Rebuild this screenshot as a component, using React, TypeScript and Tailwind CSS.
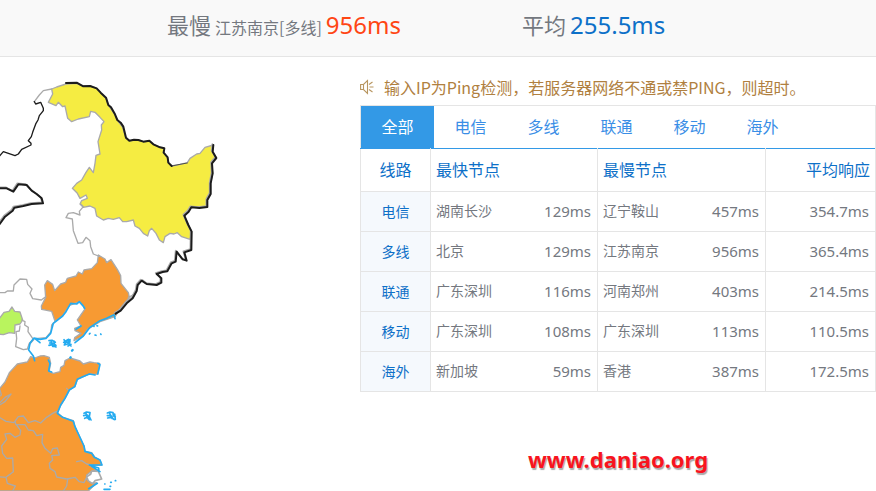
import { useState } from "react";

const tabs = ["全部", "电信", "多线", "联通", "移动", "海外"];

const rows = [
  { line: "电信", fast: ["湖南长沙", "129ms"], slow: ["辽宁鞍山", "457ms"], avg: "354.7ms" },
  { line: "多线", fast: ["北京", "129ms"], slow: ["江苏南京", "956ms"], avg: "365.4ms" },
  { line: "联通", fast: ["广东深圳", "116ms"], slow: ["河南郑州", "403ms"], avg: "214.5ms" },
  { line: "移动", fast: ["广东深圳", "108ms"], slow: ["广东深圳", "113ms"], avg: "110.5ms" },
  { line: "海外", fast: ["新加坡", "59ms"], slow: ["香港", "387ms"], avg: "172.5ms" },
];

const eastBorder =
  "M640 225L638 245 649 264 636 280 638 310 632 340 632 372 622 390 622 411 598 414 574 412 566 425 553 437 565 465 575 485 574 540 553 547 560 572 548 568 530 545 527 575 515 580 502 604 488 606 470 612 484 625 484 638 470 645 440 642 425 632 413 645 410 663 398 685 380 700 362 722 347 731";
const northBorder =
  "M198 39L230 38 250 49 270 48 290 55 302 68 318 83 325 105 333 112 345 133 352 150 362 158 370 170 378 203 388 212 402 209 415 210 430 215 448 212 460 223 480 232 493 235 491 248 503 262 505 278 515 288";

function RegionMap() {
  return (
    <svg viewBox="0 -39 720 1302" className="block w-60" fill="none" strokeLinejoin="round" strokeLinecap="round" aria-hidden="true">
      {/* Heilongjiang */}
      <path
        d="M155 57L170 51 198 42 230 40 245 47 270 47 290 55 302 68 318 85 325 105 345 135 352 150 368 172 378 205 390 212 415 210 430 215 448 213 460 222 480 232 492 235 490 248 502 262 505 278 515 288 540 283 562 278 570 265 590 252 600 250 615 232 640 225 638 245 648 262 635 280 638 310 632 340 632 372 622 390 620 410 572 412 553 437 565 465 575 485 570 508 545 500 532 488 522 492 510 490 495 500 490 518 478 510 468 490 455 475 448 482 443 498 430 490 418 475 405 468 400 450 380 455 368 455 358 443 340 448 325 445 310 450 290 438 285 415 270 408 250 412 240 402 245 392 262 385 258 375 240 385 232 370 217 355 230 340 245 330 258 307 268 292 280 308 285 280 288 256 300 252 294 215 305 180 304 165 312 155 300 142 285 127 272 124 268 140 235 147 215 155 203 145 195 108 188 110 175 97 168 107 145 97 158 72Z"
        fill="#f5ec42" stroke="#aaa" strokeWidth="4"
      />
      {/* Liaoning */}
      <path
        d="M295 555L315 567 320 578 333 569 352 598 362 617 363 640 385 668 388 682 365 710 345 740 300 755 262 778 250 798 222 812 224 803 243 790 225 782 224 775 243 768 232 750 254 718 250 708 238 696 208 706 188 738 165 754 155 724 125 718 124 708 137 682 134 645 142 632 158 643 164 662 182 642 197 637 202 625 228 618 235 606 247 612 252 600 275 596 292 578Z"
        fill="#f79a33" stroke="#aaa" strokeWidth="4"
      />
      {/* Beijing */}
      <path d="M-5 750L12 727 27 724 36 711 44 724 60 726 68 750 60 762 45 765 44 790 28 788 10 794 -5 792Z" fill="#b9f45e" stroke="#aaa" strokeWidth="4" />
      {/* Shandong, Jiangsu and the inland provinces */}
      <path
        d="M-5 960L15 936 28 908 52 882 82 876 92 860 104 864 120 858 132 857 148 862 152 880 147 905 160 910 180 905 182 892 192 886 195 872 210 864 240 873 250 882 270 876 282 878 299 880 294 912 280 913 268 912 245 922 232 928 225 950 208 960 195 985 180 1010 172 1028 188 1042 220 1052 225 1070 238 1098 252 1128 255 1144 275 1148 285 1162 300 1170 305 1185 270 1186 290 1200 275 1204 260 1215 260 1228 275 1240 290 1238 265 1263 -5 1263Z"
        fill="#f79a33" stroke="#aaa" strokeWidth="4"
      />
      {/* Shanghai */}
      <path d="M275 1203L295 1204 305 1227 285 1232 278 1241 265 1233 260 1220 272 1213Z" fill="#fff" stroke="#aaa" strokeWidth="5" />
      {/* provincial borders */}
      <g stroke="#aaa" strokeWidth="4">
        <path d="M155 57L130 62 118 75 103 95" />
        <path d="M242 402L250 410 238 424 240 435 220 428 205 430 198 443 217 447 220 482 234 520 248 518 258 502 270 512 272 530 280 552 295 558" />
        <path d="M-5 668L15 668 22 663 40 663 42 645 60 627 80 628 83 643 96 657 90 670 98 686 124 690 137 680" />
        <path d="M65 750L75 755 74 765 85 772 84 785 100 808 88 820 82 837 70 839 47 830 50 805 48 785 58 783 60 768 M165 754L155 765 153 785 138 803 105 806" />
        <path d="M385 682L405 672 415 640 428 630 440 640" />
        <path d="M102 808L86 826" />
      </g>
      <g stroke="#aaa" strokeWidth="4">
        <path d="M-5 1040L18 1054 42 1058 55 1040 70 1038 85 1058 105 1052 122 1059 140 1042 158 1030 170 1024" />
        <path d="M45 1055L48 1064 75 1064 85 1080 100 1082 110 1097 128 1093 126 1118 135 1135 152 1150 158 1136 172 1134 178 1155 155 1157 158 1170 148 1180 150 1195 165 1205 170 1221 200 1227 225 1222 238 1235 252 1238 260 1222" />
        <path d="M50 1065L62 1082 60 1095 45 1102 30 1090 15 1092 20 1108 5 1128 8 1150 20 1165 38 1164 40 1205 18 1222 -5 1220 M18 1222L22 1240 46 1248 38 1263 M203 1228L200 1248 190 1263" />
        <path d="M230 1175L245 1172 260 1182 275 1185 M0 998L15 982 33 972 15 995 0 1004 M0 960L4 975 0 978 M200 955L206 962" />
      </g>
      {/* national border: a grey inner line under the dark outer one */}
      <g stroke="#aaa" strokeWidth="5" transform="translate(-3 -3)">
        <path d={eastBorder} />
        <path d="M-3 355L20 355 40 365 55 343 80 345 95 362 125 385 129 400 95 402 70 408 43 413 38 422 15 440 -3 465" />
      </g>
      <g stroke="#1c1c1c" strokeWidth="6">
        <path d="M103 95L107 102 122 97 130 115 130 122 118 137 114 150 108 160 98 187 94 200 85 212 93 220 93 225 65 238 55 252 45 257 10 245 -3 260" strokeWidth="4" />
        <path d="M-3 355L20 355 40 365 55 343 80 345 95 362 110 372 125 385 129 400 95 402 70 408 43 413 38 422 15 440 -3 465" />
        <path d={northBorder} />
        <path d="M515 288L540 283 562 279" strokeWidth="2" />
        <path d={eastBorder} />
      </g>
      {/* coastline */}
      <g stroke="#24abf0" strokeWidth="5">
        <path d="M345 746L342 734 320 745 300 752 270 772 250 798 225 818 M243 768L228 778 M254 715L248 706 238 695 230 702 212 700 198 725 188 738 160 760 152 790 138 805 120 808 102 804 90 820 86 840 100 858 104 872 M105 806L120 818" />
        <path d="M145 870L150 880 146 903 155 906 M294 880L300 884 293 912 M285 915L268 912 245 922 232 928 224 950 208 960 195 985 182 1005 172 1030 188 1042 220 1054 225 1070 238 1098 252 1128 255 1144 275 1150 283 1162 300 1170 306 1185 268 1185 296 1194 297 1204 M275 1189L300 1205 M292 1240L266 1256" />
        <path d="M216 842L218 840 M211 863L212 862" strokeWidth="7" />
        <path d="M147 812L156 811 166 817 M149 819L160 820 168 826 M147 826L156 824 168 831 M153 812L158 829 M163 814L162 830" />
        <path d="M192 809L197 818 193 825 203 822 M198 812L206 808 204 820 213 828 M210 809L209 819 M191 817L210 815 M204 828L213 823" />
        <path d="M252 1030L260 1026 270 1028 268 1040 273 1050 M251 1037L262 1035 268 1044 M254 1045L262 1042 268 1049 M257 1027L262 1044" />
        <path d="M322 1029L330 1026 339 1028 340 1038 346 1040 M322 1037L332 1036 340 1047 M323 1044L332 1042 343 1049 M328 1028L336 1045 M344 1032L346 1048" />
        <path d="M268 792L270 790 M281 768L282 769 M291 767L293 768 M285 795L288 796 M302 792L303 793 M314 1242h1 M332 1237h2 M346 1232h1 M330 1249h2 M312 1258L330 1258" />
      </g>
    </svg>
  );
}

function SpeakerIcon() {
  return (
    <svg viewBox="0 0 16 16" className="h-4 w-4 shrink-0" fill="none" stroke="#b89660" strokeWidth="1.1" aria-hidden="true">
      <path d="M.6 5.500h2.900L7.500 1.500v13L3.500 10.500H.6zM3.500 5.500v5M9 5.500L12.500 3M9.500 8H13.500M9 10.500L12.500 13" />
    </svg>
  );
}

function NodeCell({ node }: { node: string[] }) {
  return (
    <td className="border border-[#e5e5e5] pr-[6px] pl-[5px]">
      <div className="flex items-center justify-between">
        <span>{node[0]}</span>
        <span className="text-[15px]">{node[1]}</span>
      </div>
    </td>
  );
}

export default function App() {
  const [active, setActive] = useState(0);
  return (
    <div className="min-h-screen overflow-hidden bg-white font-['Noto_Sans','Noto_Sans_CJK_SC',sans-serif] text-[#74787f]">
      <header className="flex h-[57px] items-center border-b border-[#e5e5e5] bg-[#f9f9f9] pb-[6px] pl-[167px]">
        <p className="flex w-[355px] shrink-0 items-baseline gap-1 whitespace-nowrap">
          <span className="text-[22px]">最慢</span>
          <span className="font-['Noto_Sans_CJK_SC',sans-serif] text-base">江苏南京[多线]</span>
          <strong className="text-2xl font-normal text-[#ff4614]">956ms</strong>
        </p>
        <p className="flex items-baseline gap-1 whitespace-nowrap">
          <span className="text-[22px]">平均</span>
          <strong className="text-2xl font-normal text-[#0d70c8]">255.5ms</strong>
        </p>
      </header>
      <main className="grid grid-cols-[360px_1fr]">
        <RegionMap />
        <section className="flex flex-col pt-4">
          <p className="mb-1 flex h-7 items-center gap-2 whitespace-nowrap font-['Noto_Sans_CJK_SC',sans-serif] text-base text-[#b08040]">
            <SpeakerIcon />
            输入IP为Ping检测，若服务器网络不通或禁PING，则超时。
          </p>
          <nav className="flex h-11 border border-b-[#3399e6] border-[#e5e5e5]">
            {tabs.map((tab, i) => (
              <button
                key={tab}
                type="button"
                onClick={() => setActive(i)}
                className={`w-[73px] text-base ${i === active ? "bg-[#3399e6] text-white" : "text-[#3a8ee6]"}`}
              >
                {tab}
              </button>
            ))}
          </nav>
          <table className="-mt-px w-full table-fixed border-collapse text-left text-sm">
            <colgroup>
              <col className="w-[70px]" />
              <col className="w-[167px]" />
              <col className="w-[168px]" />
              <col />
            </colgroup>
            <thead className="text-base text-[#0d70c8]">
              <tr className="h-[43px]">
                <th className="border border-t-[#3399e6] border-[#e5e5e5] text-center font-normal">线路</th>
                <th className="border border-t-[#3399e6] border-[#e5e5e5] px-[5px] font-normal">最快节点</th>
                <th className="border border-t-[#3399e6] border-[#e5e5e5] px-[5px] font-normal">最慢节点</th>
                <th className="border border-t-[#3399e6] border-[#e5e5e5] px-[5px] text-right font-normal">平均响应</th>
              </tr>
            </thead>
            <tbody>
              {rows.map((row) => (
                <tr key={row.line} className="h-10">
                  <th className="border border-[#e5e5e5] bg-[#f5f9fd] text-center font-normal text-[#0d70c8]">{row.line}</th>
                  <NodeCell node={row.fast} />
                  <NodeCell node={row.slow} />
                  <td className="border border-[#e5e5e5] px-[6px] text-right text-[15px]">{row.avg}</td>
                </tr>
              ))}
            </tbody>
          </table>
          <p className="mt-[51px] pl-[168px] text-[22px] leading-8 font-bold text-[#f8141e] [text-shadow:1px_2px_1px_#aaa]">
            www.daniao.org
          </p>
        </section>
      </main>
    </div>
  );
}
